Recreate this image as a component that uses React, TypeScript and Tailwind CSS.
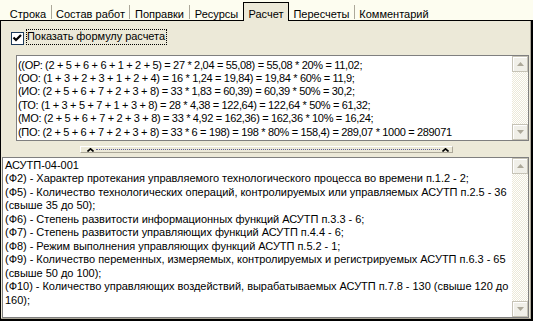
import React from "react";

const formulaLines = [
  "((ОР: (2 + 5 + 6 + 6 + 1 + 2 + 5) = 27 * 2,04 = 55,08) = 55,08 * 20% = 11,02;",
  "(ОО: (1 + 3 + 2 + 3 + 1 + 2 + 4) = 16 * 1,24 = 19,84) = 19,84 * 60% = 11,9;",
  "(ИО: (2 + 5 + 6 + 7 + 2 + 3 + 8) = 33 * 1,83 = 60,39) = 60,39 * 50% = 30,2;",
  "(ТО: (1 + 3 + 5 + 7 + 1 + 3 + 8) = 28 * 4,38 = 122,64) = 122,64 * 50% = 61,32;",
  "(МО: (2 + 5 + 6 + 7 + 2 + 3 + 8) = 33 * 4,92 = 162,36) = 162,36 * 10% = 16,24;",
  "(ПО: (2 + 5 + 6 + 7 + 2 + 3 + 8) = 33 * 6 = 198) = 198 * 80% = 158,4) = 289,07 * 1000 = 289071",
];

const descLines = [
  "АСУТП-04-001",
  "(Ф2) - Характер протекания управляемого технологического процесса во времени п.1.2 - 2;",
  "(Ф5) - Количество технологических операций, контролируемых или управляемых АСУТП п.2.5 - 36",
  "(свыше 35 до 50);",
  "(Ф6) - Степень развитости информационных функций АСУТП п.3.3 - 6;",
  "(Ф7) - Степень развитости управляющих функций АСУТП п.4.4 - 6;",
  "(Ф8) - Режим выполнения управляющих функций АСУТП п.5.2 - 1;",
  "(Ф9) - Количество переменных, измеряемых, контролируемых и регистрируемых АСУТП п.6.3 - 65",
  "(свыше 50 до 100);",
  "(Ф10) - Количество управляющих воздействий, вырабатываемых АСУТП п.7.8 - 130 (свыше 120 до",
  "160);",
];

function Sep() {
  return <div className="w-px h-[14px] mt-[5px] bg-[#ACA899]" />;
}

function Tab({ label, w }: { label: string; w: string }) {
  return <div className={`${w} text-center pt-[7.5px] whitespace-nowrap`}>{label}</div>;
}

function Arrow({ down }: { down?: boolean }) {
  return (
    <svg width="7" height="4" viewBox="0 0 7 4">
      {down ? (
        <path d="M0 0 H7 L3.5 4 Z" fill="#ACA899" />
      ) : (
        <path d="M0 4 H7 L3.5 0 Z" fill="#ACA899" />
      )}
    </svg>
  );
}

function ScrollBtn({ down }: { down?: boolean }) {
  return (
    <div className="h-[16px] w-[16px] bg-[#F0EFE8] border border-[#C6C3B6] shadow-[inset_1px_1px_0_#ffffff] flex items-center justify-center">
      <Arrow down={down} />
    </div>
  );
}

function ScrollBar() {
  return (
    <div className="w-[16px] flex flex-col shrink-0">
      <ScrollBtn />
      <div className="flex-1 bg-[image:repeating-conic-gradient(#ECE9D8_0_25%,#ffffff_0_50%)] bg-[length:2px_2px]" />
      <ScrollBtn down />
    </div>
  );
}

function Chevron() {
  return (
    <svg width="7" height="4" viewBox="0 0 7 4" className="shrink-0">
      <path d="M0.5 3.5 L3.5 0.8 L6.5 3.5" stroke="#000" strokeWidth="1.6" fill="none" />
    </svg>
  );
}

export default function App() {
  return (
    <div className="w-[533px] h-[321px] bg-[#ECE9D8] flex flex-col font-['Liberation_Sans',Arial,sans-serif] text-[11px] leading-[13.4px] text-black overflow-hidden">
      {/* Tab strip */}
      <div className="h-[21px] shrink-0 bg-[#FDFDF0] border-b border-black flex items-start pl-[5px]">
        <Tab label="Строка" w="w-[46px]" />
        <Sep />
        <Tab label="Состав работ" w="w-[77px]" />
        <Sep />
        <Tab label="Поправки" w="w-[59px]" />
        <Sep />
        <Tab label="Ресурсы" w="w-[53px]" />
        <div className="relative z-10 mt-[2px] h-[19px] w-[46px] bg-[#ECE9D8] border-l border-t border-r border-black text-center pt-[4.5px]">
          Расчет
        </div>
        <Tab label="Пересчеты" w="w-[65px]" />
        <Sep />
        <Tab label="Комментарий" w="w-[78px]" />
      </div>

      {/* Panel */}
      <div className="h-[300px] border-l border-l-black border-r-2 border-r-black border-b-2 border-b-black shadow-[inset_-1px_-1px_0_#ACA899] flex flex-col">
        {/* checkbox row */}
        <div className="mt-[8px] ml-[10px] flex items-start h-[16px]">
          <svg width="13" height="13" viewBox="0 0 13 13" className="mt-[3px] shrink-0">
            <rect x="0.5" y="0.5" width="12" height="12" fill="#fff" stroke="#1C3A5A" />
            <path d="M2.5 5.5 L5 8 L10 3" stroke="#000" strokeWidth="2.2" fill="none" />
          </svg>
          <div className="ml-[2px] h-[16px] border border-dotted border-black leading-[12px] pr-[1px] whitespace-nowrap tracking-[-0.05px]">
            Показать формулу расчета
          </div>
        </div>

        {/* formula box */}
        <div className="mt-[10px] ml-[15px] w-[513px] h-[86px] shrink-0 border border-[#7F7F7F] bg-white flex">
          <div className="flex-1 min-w-0 pt-[2.5px] pl-[1px] overflow-hidden tracking-[-0.33px]">
            {formulaLines.map((l, i) => (
              <div key={i} className="whitespace-pre">{l}</div>
            ))}
          </div>
          <ScrollBar />
        </div>

        {/* splitter */}
        <div className="mt-[5px] ml-[79px] w-[373px] h-[7px] shrink-0 border-t border-l border-t-white border-l-white border-b border-r border-b-[#ACA899] border-r-[#ACA899] flex items-center pl-[6px] pr-[3px]">
          <Chevron />
          <div className="flex-1 mx-[2px] h-0 border-t border-dotted border-[#5E5E96]" />
          <Chevron />
        </div>

        {/* description box */}
        <div className="mt-[4px] ml-[1px] w-[527px] h-[161px] shrink-0 border border-[#7F7F7F] bg-white flex">
          <div className="flex-1 min-w-0 pt-[0.5px] pl-[2px] leading-[13.5px] overflow-hidden tracking-[-0.03px]">
            {descLines.map((l, i) => (
              <div key={i} className="whitespace-pre">{l}</div>
            ))}
          </div>
          <ScrollBar />
        </div>
      </div>
    </div>
  );
}
